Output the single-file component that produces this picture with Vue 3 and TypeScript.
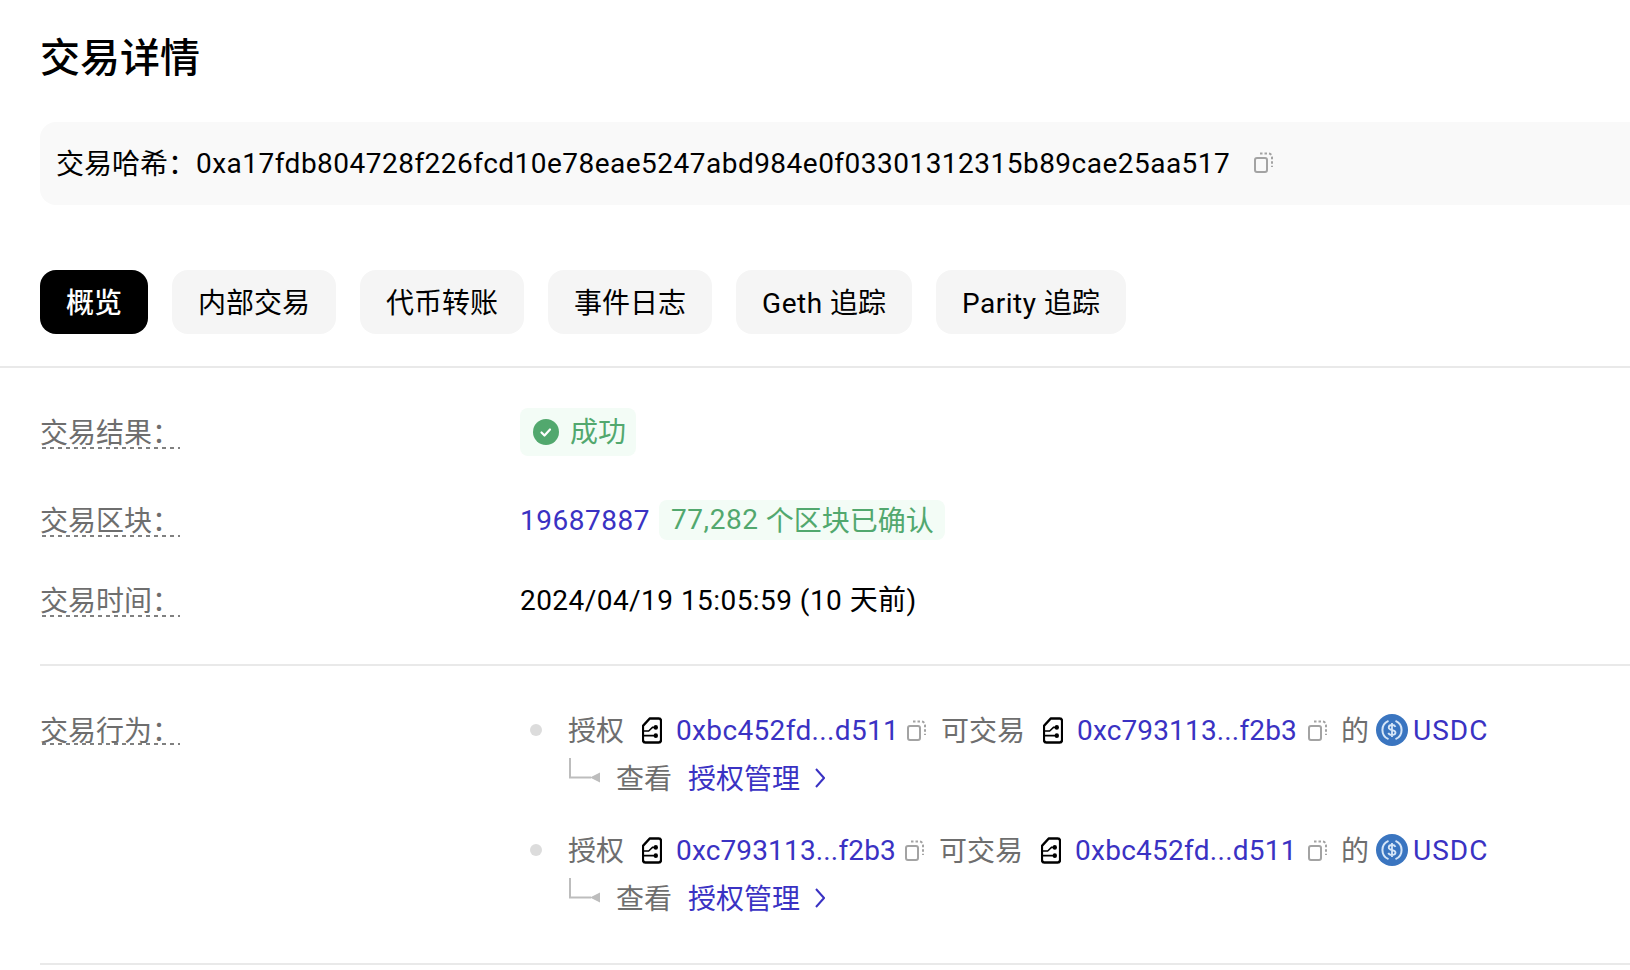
<script setup lang="ts">
interface Party {
  text: string
  width: number
  spacing: number
}
interface ActionItem {
  a: Party
  b: Party
}
interface TabItem {
  en: string
  cn: string
}
const tabs: TabItem[] = [
  { en: '', cn: '概览' },
  { en: '', cn: '内部交易' },
  { en: '', cn: '代币转账' },
  { en: '', cn: '事件日志' },
  { en: 'Geth ', cn: '追踪' },
  { en: 'Parity ', cn: '追踪' },
]
const actions: ActionItem[] = [
  {
    a: { text: '0xbc452fd...d511', width: 219, spacing: 0.35 },
    b: { text: '0xc793113...f2b3', width: 219, spacing: 0.15 },
  },
  {
    a: { text: '0xc793113...f2b3', width: 217, spacing: 0.15 },
    b: { text: '0xbc452fd...d511', width: 221, spacing: 0.27 },
  },
]
</script>

<template>
  <div class="page">
    <h1 class="title">交易详情</h1>
    <div class="hash">
      <span class="hash-label">交易哈希：</span>
      <span class="hash-value">0xa17fdb804728f226fcd10e78eae5247abd984e0f03301312315b89cae25aa517</span>
      <svg class="copy hash-copy" viewBox="0 0 20 22" fill="none">
        <rect x="1" y="7" width="12" height="14" rx="2" stroke="#a3a3a3" stroke-width="2" />
        <path d="M6 2.500h8.500a3.500 3.500 0 0 1 3.500 3.500v10" stroke="#a3a3a3" stroke-width="2" stroke-dasharray="2.500 2" />
      </svg>
    </div>
    <nav class="tabs">
      <button v-for="(t, i) in tabs" :key="i" class="tab" :class="{ active: i === 0 }"><span class="en">{{ t.en }}</span>{{ t.cn }}</button>
    </nav>
  </div>
  <div class="rule"></div>
  <div class="page">
    <section class="info">
      <div class="row row-result">
        <span class="label">交易结果：</span>
        <span class="status">
          <svg class="check" viewBox="0 0 26 26">
            <circle cx="13" cy="13" r="13" fill="#52a86e" />
            <path d="M8.500 13.500l3 3 5.500-6" fill="none" stroke="#fff" stroke-width="2.200" stroke-linecap="round" stroke-linejoin="round" />
          </svg>
          <span class="status-text">成功</span>
        </span>
      </div>
      <div class="row row-block">
        <span class="label">交易区块：</span>
        <span class="link en">19687887</span>
        <span class="confirm"><span class="en wide">77,282</span>&nbsp;个区块已确认</span>
      </div>
      <div class="row row-time">
        <span class="label">交易时间：</span>
        <span class="time">2024/04/19 15:05:59 (10 天前)</span>
      </div>
    </section>
    <div class="divider"></div>
    <section class="acts">
      <div class="acts-label"><span class="label">交易行为：</span></div>
      <div class="acts-list">
        <div v-for="(x, i) in actions" :key="i" class="act">
          <div class="line">
            <i class="dot"></i>
            <span class="muted auth">授权</span>
            <svg class="doc" viewBox="0 0 21 26" fill="none" preserveAspectRatio="none">
              <path d="M8 1.500h9.500a2.500 2.500 0 0 1 2.500 2.500v18a2.500 2.500 0 0 1-2.500 2.500H3.500A2.500 2.500 0 0 1 1 22V8.500z" stroke="#000" stroke-width="2.400" stroke-linejoin="round" />
              <path d="M2 13.500h5l4-3.500h3M2 18h12" stroke="#000" stroke-width="1.600" />
              <circle cx="14.500" cy="10" r="2.300" fill="#000" />
              <circle cx="14.500" cy="18" r="2.300" fill="#000" />
            </svg>
            <span class="link addr" :style="{ width: x.a.width + 'px', letterSpacing: x.a.spacing + 'px' }">{{ x.a.text }}</span>
            <svg class="copy" viewBox="0 0 20 22" fill="none">
              <rect x="1" y="7" width="12" height="14" rx="2" stroke="#a3a3a3" stroke-width="2" />
              <path d="M6 2.500h8.500a3.500 3.500 0 0 1 3.500 3.500v10" stroke="#a3a3a3" stroke-width="2" stroke-dasharray="2.500 2" />
            </svg>
            <span class="muted trade">可交易</span>
            <svg class="doc" viewBox="0 0 21 26" fill="none" preserveAspectRatio="none">
              <path d="M8 1.500h9.500a2.500 2.500 0 0 1 2.500 2.500v18a2.500 2.500 0 0 1-2.500 2.500H3.500A2.500 2.500 0 0 1 1 22V8.500z" stroke="#000" stroke-width="2.400" stroke-linejoin="round" />
              <path d="M2 13.500h5l4-3.500h3M2 18h12" stroke="#000" stroke-width="1.600" />
              <circle cx="14.500" cy="10" r="2.300" fill="#000" />
              <circle cx="14.500" cy="18" r="2.300" fill="#000" />
            </svg>
            <span class="link addr" :style="{ width: x.b.width + 'px', letterSpacing: x.b.spacing + 'px' }">{{ x.b.text }}</span>
            <svg class="copy" viewBox="0 0 20 22" fill="none">
              <rect x="1" y="7" width="12" height="14" rx="2" stroke="#a3a3a3" stroke-width="2" />
              <path d="M6 2.500h8.500a3.500 3.500 0 0 1 3.500 3.500v10" stroke="#a3a3a3" stroke-width="2" stroke-dasharray="2.500 2" />
            </svg>
            <span class="muted of">的</span>
            <svg class="usdc" viewBox="0 0 32 32" fill="none">
              <circle cx="16" cy="16" r="16" fill="#3a75c0" />
              <path d="M12.500 6.800a10 10 0 0 0 0 18.400M19.500 6.800a10 10 0 0 1 0 18.400" stroke="#d6e6f7" stroke-width="2" />
              <path d="M19.500 12.800c-.6-1.300-1.900-1.800-3.500-1.800-1.900 0-3.300 1-3.300 2.500 0 3.500 6.800 1.700 6.800 5.100 0 1.500-1.500 2.400-3.500 2.400-1.800 0-3.100-.7-3.700-2.100M16 9v14" stroke="#d6e6f7" stroke-width="1.800" />
            </svg>
            <span class="link token">USDC</span>
          </div>
          <div class="line sub">
            <svg class="branch" viewBox="0 0 31 25" fill="none">
              <path d="M1 0v19.500h21" stroke="#bdbdbd" stroke-width="2" />
              <path d="M31 14.500v10l-10-5z" fill="#bdbdbd" />
            </svg>
            <span class="muted look">查看</span>
            <span class="link manage">授权管理</span>
            <svg class="chev" viewBox="0 0 10 20" fill="none">
              <path d="M1 1l8 9-8 9" stroke="#3a32c3" stroke-width="2" />
            </svg>
          </div>
        </div>
      </div>
    </section>
    <div class="divider last"></div>
  </div>
</template>

<style>
html, body { background: #fff; overflow: hidden; }
</style>

<style scoped>
.page {
  padding-left: 40px;
  font-family: Roboto, "Noto Sans CJK SC", sans-serif;
  font-size: 28px;
  color: #000;
  overflow: hidden;
}
.title {
  margin: 27px 0 39px;
  font-size: 40px;
  line-height: 56px;
  font-weight: 500;
  font-family: "Noto Sans CJK SC", sans-serif;
}
.hash {
  height: 83px;
  margin-right: -20px;
  padding-left: 16px;
  display: flex;
  align-items: center;
  background: #f9f9f9;
  border-radius: 16px;
}
.hash-label { width: 140px; flex: none; margin-bottom: 4px; }
.hash-value { width: 1034px; flex: none; white-space: nowrap; letter-spacing: 0.48px; }
.copy { width: 20px; height: 22px; flex: none; margin-left: 12px; }
.hash .hash-copy { margin-left: 24px; margin-top: -3px; }
.tabs {
  margin-top: 65px;
  margin-bottom: 32px;
  display: flex;
  gap: 24px;
}
.tab {
  height: 64px;
  padding: 0 26px 3px;
  border: 0;
  border-radius: 16px;
  background: #f5f5f5;
  color: #000;
  font: inherit;
  white-space: nowrap;
}
.tab.active { background: #000; color: #fff; font-weight: 500; }
.en { letter-spacing: 0.5px; }
.en.wide { letter-spacing: 0.6px; }
.rule { height: 2px; background: #e9e9e9; }
.info { padding-top: 40px; }
.row { display: flex; align-items: center; }
.row-result { height: 48px; }
.row-block { height: 40px; margin-top: 44px; }
.row-time { height: 40px; margin-top: 40px; }
.label {
  width: 140px;
  margin-right: 340px;
  flex: none;
  box-sizing: border-box;
  height: 34px;
  padding-top: 5px;
  line-height: 27px;
  color: #6e6e6e;
  white-space: nowrap;
  background: repeating-linear-gradient(90deg, #808080 0 4px, transparent 4px 8px) 2px 100% / 100% 2px no-repeat;
}
.status {
  height: 48px;
  width: 116px;
  box-sizing: border-box;
  padding-left: 13px;
  display: flex;
  align-items: center;
  gap: 11px;
  border-radius: 8px;
  background: #f3fcf6;
  color: #52a86e;
}
.status-text { margin-bottom: 4px; }
.check { width: 26px; height: 26px; flex: none; }
.link { color: #3a32c3; white-space: nowrap; }
.confirm {
  height: 40px;
  margin-left: 9px;
  padding: 0 11px 2px 12px;
  box-sizing: border-box;
  display: flex;
  align-items: center;
  border-radius: 8px;
  background: #f3fcf6;
  color: #52a86e;
  white-space: nowrap;
}
.time { white-space: nowrap; letter-spacing: 0.45px; margin-bottom: 4px; }
.divider { height: 2px; margin-top: 44px; background: #e9e9e9; }
.acts { display: flex; padding-top: 41px; }
.acts-label { width: 480px; flex: none; padding-top: 4px; }
.acts-label .label { display: block; margin-right: 0; padding-top: 7px; }
.acts-list { display: flex; flex-direction: column; gap: 24px; }
.line { height: 48px; box-sizing: border-box; padding-bottom: 2px; display: flex; align-items: center; white-space: nowrap; }
.dot { width: 12px; height: 12px; margin-left: 10px; flex: none; border-radius: 50%; background: #dcdcdc; }
.muted { color: #6e6e6e; margin-bottom: 2px; }
.auth { width: 56px; margin-left: 26px; flex: none; }
.doc { width: 20px; height: 27px; margin-left: 18px; flex: none; }
.addr { margin-left: 14px; flex: none; }
.trade { width: 84px; margin-left: 14px; flex: none; }
.of { width: 28px; margin-left: 13px; flex: none; }
.usdc { width: 32px; height: 32px; margin-left: 7px; flex: none; }
.token { margin-left: 5px; letter-spacing: 1px; }
.branch { width: 31px; height: 25px; margin-left: 49px; margin-top: -16px; flex: none; }
.look { margin-left: 16px; margin-bottom: 3px; }
.manage { margin-left: 16px; margin-bottom: 3px; }
.chev { width: 10px; height: 20px; margin-left: 15px; flex: none; }
.divider.last { margin-top: 40px; }
</style>
